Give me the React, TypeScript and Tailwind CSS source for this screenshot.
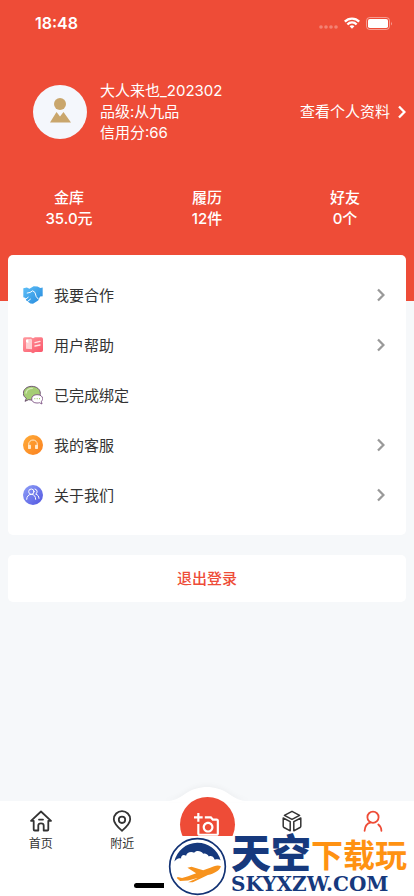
import { ReactNode } from "react";
import { MdOutlineAddAPhoto } from "react-icons/md";

interface MenuItem {
  label: string;
  icon: ReactNode;
  arrow: boolean;
}

interface Stat {
  label: string;
  value: string;
}

const stats: Stat[] = [
  { label: "金库", value: "35.0元" },
  { label: "履历", value: "12件" },
  { label: "好友", value: "0个" },
];

function Chevron({ className }: { className?: string }) {
  return (
    <svg
      viewBox="0 0 8 14"
      className={`w-2 h-[14px] shrink-0 ${className ?? ""}`}
      fill="none"
      stroke="currentColor"
      strokeWidth="2.3"
    >
      <path d="M1 1.5 6.4 7 1 12.5" />
    </svg>
  );
}

function HandshakeIcon() {
  return (
    <svg viewBox="68 45 62 60" className="w-5 h-5 shrink-0">
      <defs>
        <linearGradient id="shake" x1="0" y1="0" x2="1" y2="1">
          <stop offset="0" stopColor="#5fc0f8" />
          <stop offset="1" stopColor="#2488dc" />
        </linearGradient>
      </defs>
      <path
        d="M69 54 80 52 88 56 101 48 113 49 122 53 129 52V79L121 80 115 92 99 102 91 101 78 92 76 84 69 82Z"
        fill="url(#shake)"
      />
      <path
        d="M81 69 90 67 98 62 105 67 109 80 115 87M76 88 84 82M82 95 91 88"
        fill="none"
        stroke="#fff"
        strokeWidth="3"
        strokeLinecap="round"
        strokeLinejoin="round"
      />
    </svg>
  );
}

function BookIcon() {
  return (
    <svg viewBox="0 0 60 60" className="w-5 h-5 shrink-0">
      <defs>
        <linearGradient id="book" x1="0" y1="0" x2="1" y2="1">
          <stop offset="0" stopColor="#ff9a9f" />
          <stop offset="1" stopColor="#fb5468" />
        </linearGradient>
      </defs>
      <path
        d="M5 7H24L30 10 36 7H55Q60 7 60 12V46Q60 51 55 51H37L30 55 23 51H5Q0 51 0 46V12Q0 7 5 7Z"
        fill="url(#book)"
      />
      <path d="M9 14 24 11 27 14V43L9 41Z" fill="#ffd0d2" />
      <path d="M9 14 16 13V24L9 21Z" fill="#fff" />
      <path
        d="M36 23 51 19M36 33 51 30"
        stroke="#ffe3e4"
        strokeWidth="4"
        strokeLinecap="round"
      />
    </svg>
  );
}

function ChatIcon() {
  return (
    <svg viewBox="0 0 60 60" className="w-5 h-5 shrink-0">
      <path
        d="M26 4C12 4 1 13 1 25C1 32 5 37 10 40L6 49 17 44C20 45 24 45 28 45C42 44 52 36 52 25C52 13 41 4 26 4Z"
        fill="#a5cd74"
        stroke="#5f3d68"
        strokeWidth="2.5"
      />
      <path
        d="M9 24C11 15 18 10 28 10"
        fill="none"
        stroke="#d3e9b4"
        strokeWidth="4"
        strokeLinecap="round"
      />
      <path
        d="M42 29C33 29 26 34 26 42C26 49 32 54 42 54C45 54 47 54 49 53L57 57 55 49C58 47 59 44 59 41C59 34 52 29 42 29Z"
        fill="#fff"
        stroke="#75477c"
        strokeWidth="2.5"
      />
      <path
        d="M34 41H37M41 41H44M48 41H51"
        stroke="#a5cd74"
        strokeWidth="3.5"
      />
    </svg>
  );
}

function HeadsetIcon() {
  return (
    <svg viewBox="0 0 60 60" className="w-5 h-5 shrink-0">
      <defs>
        <linearGradient id="headset" x1="0" y1="0" x2="1" y2="1">
          <stop offset="0" stopColor="#ffac38" />
          <stop offset="1" stopColor="#fb8020" />
        </linearGradient>
      </defs>
      <circle cx="30" cy="30" r="30" fill="url(#headset)" />
      <path
        d="M17 34V28A13 13 0 0 1 43 28V34"
        fill="none"
        stroke="#ffe9c9"
        strokeWidth="3"
      />
      <rect x="15" y="29" width="9" height="13" rx="2" fill="#ffe9c9" />
      <rect x="36" y="29" width="9" height="13" rx="2" fill="#ffe9c9" />
    </svg>
  );
}

function TeamIcon() {
  return (
    <svg viewBox="0 0 60 60" className="w-5 h-5 shrink-0">
      <defs>
        <linearGradient id="team" x1="0" y1="0" x2="1" y2="1">
          <stop offset="0" stopColor="#8fa0f8" />
          <stop offset="1" stopColor="#5155e0" />
        </linearGradient>
      </defs>
      <circle cx="30" cy="30" r="30" fill="url(#team)" />
      <g fill="none" stroke="#fff" strokeWidth="3" strokeLinecap="round">
        <circle cx="25" cy="20" r="8" />
        <path d="M11 43C11 34 17 28 25 28S38 34 38 43" />
        <path d="M36 12A8 8 0 0 1 38 27C44 29 48 34 48 40" />
      </g>
    </svg>
  );
}

const menuItems: MenuItem[] = [
  { label: "我要合作", icon: <HandshakeIcon />, arrow: true },
  { label: "用户帮助", icon: <BookIcon />, arrow: true },
  { label: "已完成绑定", icon: <ChatIcon />, arrow: false },
  { label: "我的客服", icon: <HeadsetIcon />, arrow: true },
  { label: "关于我们", icon: <TeamIcon />, arrow: true },
];

function StatusBar() {
  return (
    <div className="flex items-center justify-between h-11 pl-[35px] pr-[21px] pt-[2px]">
      <span className="text-base font-semibold">18:48</span>
      <div className="flex items-center gap-[6px]">
        <svg viewBox="0 0 19 12" className="w-[19px] h-3" fill="#fff">
          <g opacity="0.3">
            <circle cx="2" cy="10" r="1.8" />
            <circle cx="7" cy="10" r="1.8" />
            <circle cx="12" cy="10" r="1.8" />
            <circle cx="17" cy="10" r="1.8" />
          </g>
        </svg>
        <svg
          viewBox="0 0 16 12"
          className="w-4 h-3"
          fill="none"
          stroke="#fff"
          strokeWidth="2.3"
        >
          <path d="M0.8 4.6A10 10 0 0 1 15.2 4.6" />
          <path d="M3.4 7.5A6.2 6.2 0 0 1 12.6 7.5" />
          <path
            d="M5.6 9.3A3.2 3.2 0 0 1 10.4 9.3L8 11.8Z"
            fill="#fff"
            stroke="none"
          />
        </svg>
        <svg viewBox="0 0 27 13" className="w-[27px] h-[13px]">
          <rect
            x="0.5"
            y="0.5"
            width="23"
            height="12"
            rx="3.2"
            fill="none"
            stroke="#fff"
            strokeOpacity="0.45"
          />
          <rect x="2" y="2" width="20" height="9" rx="1.8" fill="#fff" />
          <path d="M25 4.5Q26.6 6.5 25 8.5Z" fill="#fff" fillOpacity="0.5" />
        </svg>
      </div>
    </div>
  );
}

function Header() {
  return (
    <header className="bg-[#ee4c37] text-white pb-[72px]">
      <StatusBar />
      <div className="flex items-center pl-[33px] pr-2 mt-9">
        <svg viewBox="0 0 54 54" className="w-[54px] h-[54px] shrink-0">
          <circle cx="27" cy="27" r="27" fill="#f4f7fc" />
          <circle cx="27" cy="19" r="6" fill="#c9a66c" />
          <path d="M17 37.5 23.5 27 27 31.5 30.5 27 38 37.5Z" fill="#c9a66c" />
        </svg>
        <div className="ml-[13px] text-[15px] leading-[21px]">
          <p>大人来也_202302</p>
          <p>品级:从九品</p>
          <p>信用分:66</p>
        </div>
        <button className="ml-auto flex items-center gap-2 text-[15px] leading-[21px]">
          查看个人资料
          <Chevron />
        </button>
      </div>
      <div className="grid grid-cols-3 mt-11 text-center text-[15px] leading-[21px] font-medium">
        {stats.map((stat) => (
          <div key={stat.label}>
            <p>{stat.label}</p>
            <p>{stat.value}</p>
          </div>
        ))}
      </div>
    </header>
  );
}

function Watermark() {
  return (
    <div className="absolute right-0 bottom-0 flex items-start w-[250px] h-[60px] bg-white">
      <svg
        viewBox="38 170 176 176"
        className="w-[59px] h-[59px] ml-1 mt-px shrink-0"
      >
        <circle
          cx="126"
          cy="258"
          r="83"
          fill="#fff"
          stroke="#123274"
          strokeWidth="5"
        />
        <path
          d="M57 243A71 71 0 0 1 195 240C188 234 181 238 177 237C174 228 166 225 160 228C154 218 147 218 143 220C137 210 121 209 116 217C107 211 93 216 92 226C84 220 76 226 77 234C68 231 63 237 57 243Z"
          fill="#16397d"
        />
        <path
          d="M196 257C187 252 175 256 164 262L143 269 108 259 96 262 122 278 98 287 80 292 67 289 64 292 74 301 98 300 126 292 98 305 112 305 157 283C176 279 191 271 196 257Z"
          fill="#f7931e"
        />
      </svg>
      <div className="ml-1 font-bold whitespace-nowrap">
        <div className="flex items-end h-9">
          <span className="text-[40px] leading-9 font-black text-[#16397d]">
            天空
          </span>
          <span className="text-[32px] leading-8 text-[#ff9212]">
            下载玩
          </span>
        </div>
        <div className="text-[20px] leading-6 font-black text-[#16397d] font-['DejaVu_Serif',serif]">
          SKYXZW.COM
        </div>
      </div>
    </div>
  );
}

function TabBar() {
  return (
    <nav className="relative mt-auto bg-white pt-[9px] pb-2 text-[#333]">
      <div className="flex items-start">
        <button className="flex-1 flex flex-col items-center">
          <svg
            viewBox="0 0 22 22"
            className="w-[22px] h-[22px]"
            fill="none"
            stroke="currentColor"
            strokeWidth="1.8"
            strokeLinejoin="round"
            strokeLinecap="round"
          >
            <path d="M1 10.8 11 1.5 21 10.8H18.3V19.5Q18.3 20.5 17.3 20.5H13.7V15.5Q13.7 13.4 11 13.4T8.3 15.5V20.5H4.7Q3.7 20.5 3.7 19.5V10.8Z" />
            <path d="M9 9.6H13" />
          </svg>
          <span className="text-xs leading-6">首页</span>
        </button>
        <button className="flex-1 flex flex-col items-center">
          <svg
            viewBox="0 0 22 22"
            className="w-[22px] h-[22px]"
            fill="none"
            stroke="currentColor"
            strokeWidth="1.8"
            strokeLinejoin="round"
          >
            <path d="M11 20.8C7 17.3 2.8 13.8 2.8 9.3A8.2 8.2 0 0 1 19.2 9.3C19.2 13.8 15 17.3 11 20.8Z" />
            <circle cx="11" cy="9.8" r="3.2" />
          </svg>
          <span className="text-xs leading-6">附近</span>
        </button>
        <div className="relative flex justify-center w-[88px]">
          <svg
            viewBox="0 0 88 15"
            className="absolute left-0 -top-[23px] w-[88px] h-[15px] drop-shadow-[0_-2px_2px_rgba(0,0,0,0.03)]"
            fill="#fff"
          >
            <path d="M0 15C12 14 16 11 22 7C29 2 37 0 44 0S59 2 66 7C72 11 76 14 88 15Z" />
          </svg>
          <button
            aria-label="拍照"
            className="relative flex items-center justify-center w-[55px] h-[55px] -my-[13px] rounded-full bg-[#ee4c37] text-white"
          >
            <MdOutlineAddAPhoto className="w-[26px] h-[26px]" />
          </button>
        </div>
        <button aria-label="订单" className="flex-1 flex flex-col items-center">
          <svg
            viewBox="0 0 22 22"
            className="w-[22px] h-[22px]"
            fill="none"
            stroke="currentColor"
            strokeWidth="1.5"
            strokeLinejoin="round"
          >
            <path d="M11 1.3 18.6 5.3 11 9.3 3.4 5.3Z" />
            <path d="M2.2 8 9.2 11.7V20.8L3 17.5Q2.2 17 2.2 16.2Z" />
            <path d="M19.8 8 12.8 11.7V20.8L19 17.5Q19.8 17 19.8 16.2Z" />
          </svg>
        </button>
        <button
          aria-label="我的"
          className="flex-1 flex flex-col items-center text-[#ee4c37]"
        >
          <svg
            viewBox="0 0 22 22"
            className="w-[22px] h-[22px]"
            fill="none"
            stroke="currentColor"
            strokeWidth="1.8"
            strokeLinecap="round"
          >
            <circle cx="11" cy="7.2" r="5.6" />
            <path d="M2.6 20.8C2.8 16.5 5 13.6 8.6 12.4" />
            <path d="M16.3 14.5C18.3 16 19.3 18.2 19.4 20.8" />
          </svg>
        </button>
      </div>
      <div className="w-[146px] h-[5px] mx-auto mt-[27px] rounded-full bg-black" />
      <Watermark />
    </nav>
  );
}

export default function App() {
  return (
    <div className="flex flex-col min-h-screen bg-[#f6f8fa] font-[Inter,'Noto_Sans_CJK_SC',sans-serif]">
      <Header />
      <main className="px-2 -mt-[46px] pb-10">
        <section className="bg-white rounded-[5px] py-[15px]">
          {menuItems.map((item) => (
            <button
              key={item.label}
              className="flex items-center gap-[11px] w-full h-[50px] pl-[15px] pr-[21px] text-[15px] text-[#333]"
            >
              {item.icon}
              <span className="pt-[2px]">{item.label}</span>
              {item.arrow && <Chevron className="ml-auto text-[#999]" />}
            </button>
          ))}
        </section>
        <button className="w-full h-[47px] mt-5 pt-[2px] bg-white rounded-[5px] text-[15px] font-medium text-[#ee4c37]">
          退出登录
        </button>
      </main>
      <TabBar />
    </div>
  );
}
